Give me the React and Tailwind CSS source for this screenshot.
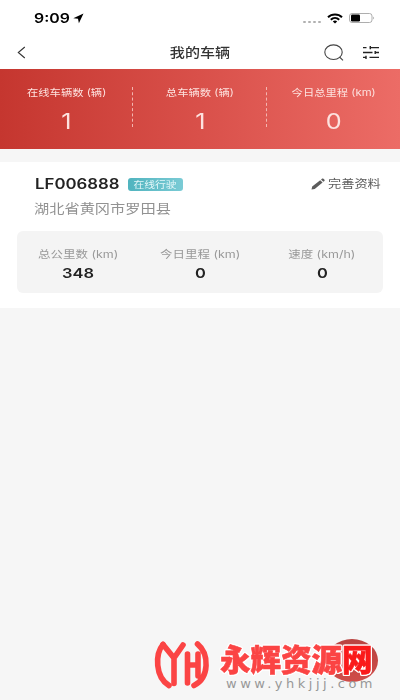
import clsx from 'clsx'

const totals = [
  { label: '在线车辆数 (辆)', value: '1' },
  { label: '总车辆数 (辆)', value: '1' },
  { label: '今日总里程 (km)', value: '0' },
]

const stats = [
  { label: '总公里数 (km)', value: '348' },
  { label: '今日里程 (km)', value: '0' },
  { label: '速度 (km/h)', value: '0' },
]

// wide lettering, every text in the app is a bit stretched
function Wide({ className, children }) {
  return <span className={clsx('block whitespace-nowrap', className)}>{children}</span>
}

function StatusBar() {
  return (
    <div className="flex h-9 items-start justify-between pl-[34px] pr-[25px] text-black">
      <div className="flex h-9 items-center pt-px">
        <Wide className="w-[39px] origin-left scale-x-[1.22] text-[13px] font-semibold leading-none">9:09</Wide>
        <svg className="h-[11px] w-[11px]" viewBox="0 0 11 11"><path d="M10.5 0.5 L0.3 5.2 L5 5.7 L5.9 10.2 Z" fill="currentColor" /></svg>
      </div>
      <div className="flex h-9 items-center">
        <div className="mr-[6px] mt-[7px] flex gap-[2px]">
          {[0, 1, 2, 3].map((i) => <i key={i} className="h-[2px] w-[3px] rounded-full bg-[#b0b0b0]" />)}
        </div>
        <svg className="mr-[6px] h-[11px] w-4" viewBox="0 0 16 11" fill="none" stroke="currentColor" strokeWidth="2">
          <path d="M1 4.3 C4.8 0.6 11.2 0.6 15 4.3" />
          <path d="M3.8 6.8 C6.2 4.5 9.8 4.5 12.2 6.8" />
          <path d="M8 10.4 L5.8 8.4 Q8 6.7 10.2 8.4 Z" fill="currentColor" stroke="none" />
        </svg>
        <svg className="h-[10px] w-[26px]" viewBox="0 0 26 10">
          <rect x="0.5" y="0.5" width="22.5" height="9" rx="2.5" fill="none" stroke="#999" strokeWidth="0.8" />
          <rect x="2" y="1.6" width="9" height="6.8" rx="1.2" fill="#000" />
          <path d="M24.3 3.5 Q26 5 24.3 6.5 Z" fill="#888" />
        </svg>
      </div>
    </div>
  )
}

function Header() {
  return (
    <div className="grid h-[33px] grid-cols-3 items-center pb-px">
      <svg className="ml-[17px] h-[13px] w-[9px]" viewBox="0 0 9 13" fill="none" stroke="#333" strokeWidth="1.1"><path d="M7.8 1 L1.3 6.5 L7.8 12" /></svg>
      <div className="flex justify-center text-[#333]">
        <Wide className="scale-x-[1.16] text-[13px] font-medium leading-none">我的车辆</Wide>
      </div>
      <div className="flex items-center justify-end gap-[18px] pr-5">
        <svg className="h-[17px] w-5" viewBox="0 0 20 17" fill="none" stroke="#444" strokeWidth="1.1">
          <ellipse cx="9.5" cy="8.2" rx="8.7" ry="7.3" />
          <path d="M15.5 13 L19 16.3" />
        </svg>
        <svg className="h-[13px] w-[18px]" viewBox="0 0 18 13" fill="none" stroke="#222" strokeWidth="1.4">
          <path d="M1 1.6 H4.5 M7.5 1.6 H17 M8.3 0 V3.2 M1 6.5 H10.5 M12.5 6.5 H17 M13.2 4.9 V8.1 M1 11.4 H4.5 M4 9.8 V13 M7.5 11.4 H17" />
        </svg>
      </div>
    </div>
  )
}

function Summary() {
  return (
    <div className="grid h-20 grid-cols-3 bg-linear-to-r from-[#c5362f] via-[#d9504a] to-[#ec6c66]">
      {totals.map((t, i) => (
        <div key={t.label} className="relative flex flex-col items-center pt-[17px] text-[#fde2df]">
          <Wide className="scale-x-[1.18] text-[9.6px] leading-[13px]">{t.label}</Wide>
          <Wide className="mt-[9px] scale-x-[1.2] text-[21px] leading-[27px]">{t.value}</Wide>
          {i < 2 && <div className="absolute right-0 top-[18px] h-10 border-r border-dashed border-[#f3b5b0]" />}
        </div>
      ))}
    </div>
  )
}

function Vehicle() {
  return (
    <div className="mt-[13px] h-[146px] bg-white px-[17px] pt-[13px]">
      <div className="flex h-[18px] items-center justify-between pl-[18px] pr-[2px]">
        <div className="flex items-center">
          <div className="w-[93px]">
            <Wide className="w-[70px] origin-left scale-x-[1.2] text-[14px] font-semibold leading-none text-[#222]">LF006888</Wide>
          </div>
          <div className="flex h-[13px] w-[55px] items-center justify-center rounded-[3px] bg-linear-to-r from-[#50b4bf] to-[#7acbd5] text-[#e2f6f8]">
            <Wide className="scale-x-[1.2] text-[9px] leading-none">在线行驶</Wide>
          </div>
        </div>
        <div className="flex items-center text-[#5c5c5c]">
          <svg className="mr-[3px] h-3 w-[14px]" viewBox="0 0 14 12" fill="currentColor">
            <path d="M0.5 11.5 L1.2 8.6 L9.2 2.2 L11.6 4.4 L3.7 10.9 Z M10 1.6 L11.3 0.6 Q11.9 0.2 12.5 0.7 L13.5 1.7 Q14 2.3 13.4 2.9 L12.3 3.8 Z" />
          </svg>
          <div className="w-[53px]">
            <Wide className="w-11 origin-left scale-x-[1.2] text-[11px] leading-none">完善资料</Wide>
          </div>
        </div>
      </div>
      <div className="mt-[5px] h-[20px] pl-[17px] text-[#929292]">
        <Wide className="origin-left scale-x-[1.17] text-[13px] leading-[20px]">湖北省黄冈市罗田县</Wide>
      </div>
      <div className="mt-[13px] grid h-[62px] grid-cols-3 rounded-md bg-[#f4f4f4] pt-4">
        {stats.map((s) => (
          <div key={s.label} className="flex flex-col items-center">
            <Wide className="scale-x-[1.21] text-[10.3px] leading-[14px] text-[#999]">{s.label}</Wide>
            <Wide className="mt-[4px] scale-x-[1.22] text-[13.5px] font-semibold leading-4 text-[#222]">{s.value}</Wide>
          </div>
        ))}
      </div>
    </div>
  )
}

function Brand() {
  return (
    <div className="absolute bottom-0 left-0 h-[64px] w-full">
      <div className="absolute left-[326px] top-[3px] h-[43px] w-[52px] rounded-[50%] bg-linear-to-b from-[#b94441] to-[#d04c49]" />
      <div className="relative flex pl-[153px] pt-[4px]">
        <svg className="h-[50px] w-[58px] shrink-0" viewBox="0 0 58 50" fill="none" stroke="#fb4444" strokeWidth="5.6" strokeLinecap="round" strokeLinejoin="round">
          <path d="M10 4.5 C2 14 2 37 16 45.5" />
          <path d="M10 4.5 L21 18 L30 5 M21 18 V43.5" />
          <path d="M44.5 4 C56.5 14 56.5 38 41 45.5 M34.5 14 V43 M34.5 25 H45 M45 14 V36" />
        </svg>
        <div className="ml-[9px] mt-[5px]">
          <Wide className="h-[30px] text-[30.5px] font-black leading-[30px] text-[#fb4444] [-webkit-text-stroke:0.6px_currentColor] [filter:drop-shadow(1px_0_0_white)_drop-shadow(-1px_0_0_white)_drop-shadow(0_1px_0_white)_drop-shadow(0_-1px_0_white)]">
            永辉资源<span className="text-[#fa1a1a]">网</span>
          </Wide>
          <Wide className="ml-[6px] mt-px h-[15px] font-['DejaVu_Sans',sans-serif] text-[13px] leading-[15px] tracking-[3.5px] text-[#989898]">www.yhkjjj.com</Wide>
        </div>
      </div>
    </div>
  )
}

export default function App() {
  return (
    <div className="relative h-[700px] w-[400px] overflow-hidden bg-[#f6f6f6] font-[Inter,'Noto_Sans_CJK_SC',sans-serif]">
      <div className="bg-white">
        <StatusBar />
        <Header />
      </div>
      <Summary />
      <Vehicle />
      <Brand />
    </div>
  )
}
